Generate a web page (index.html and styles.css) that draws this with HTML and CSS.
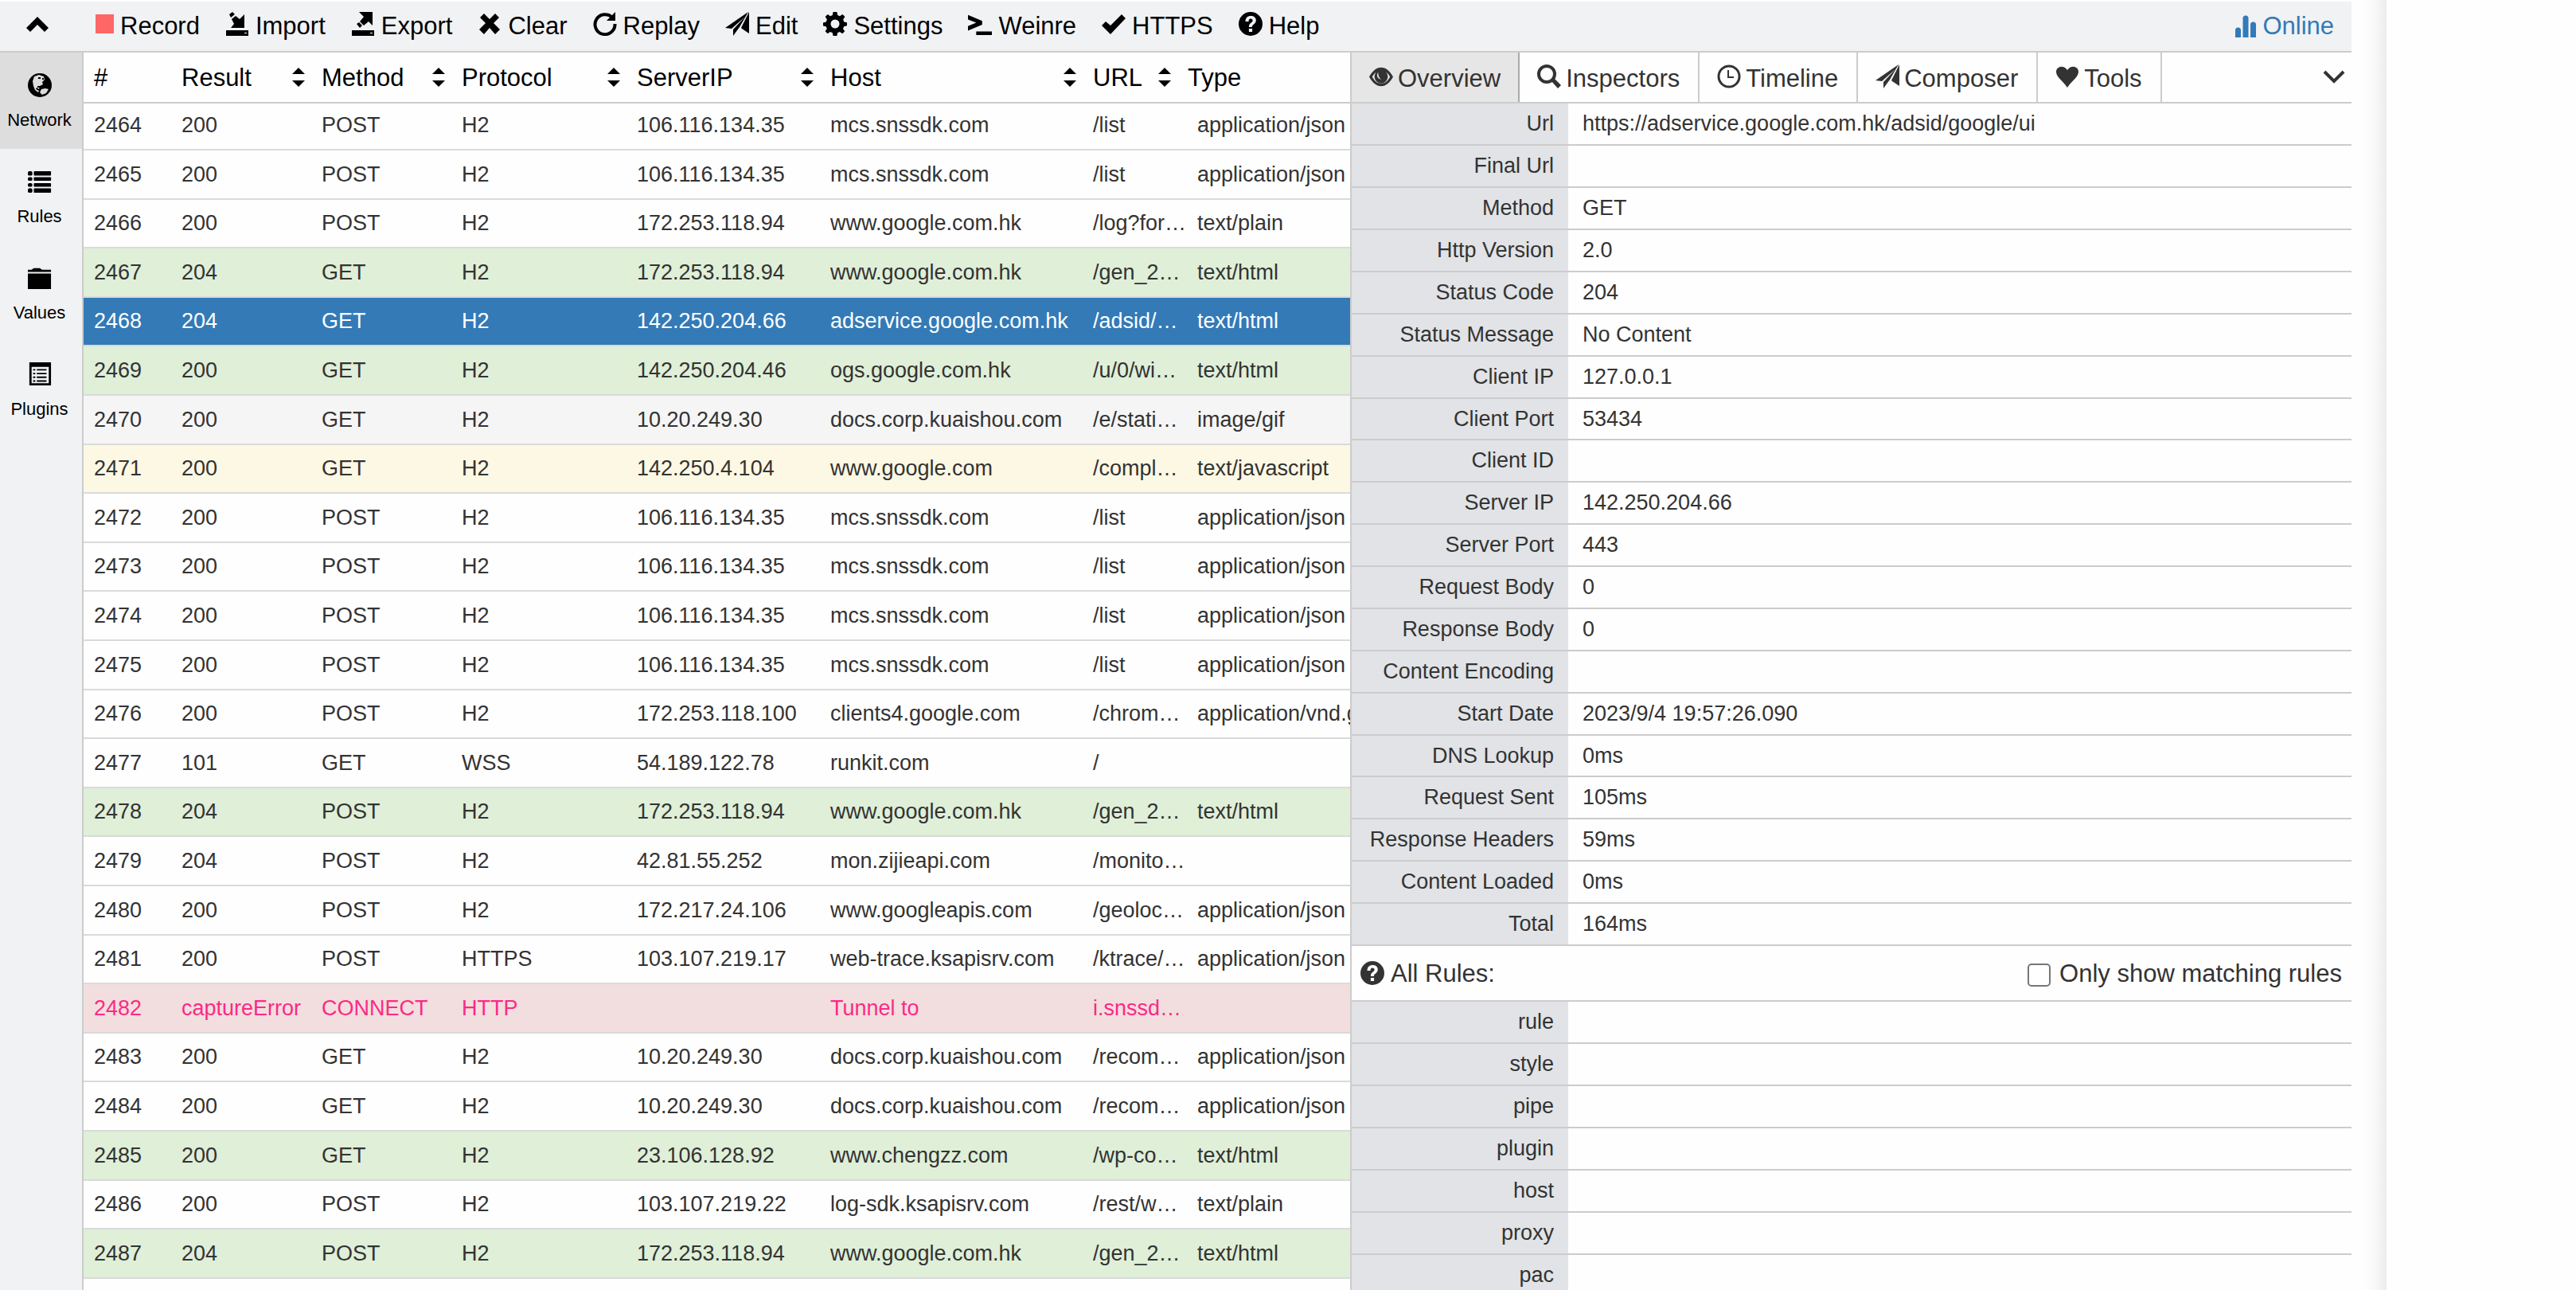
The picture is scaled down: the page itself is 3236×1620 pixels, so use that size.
FILE: index.html
```html
<!DOCTYPE html>
<html lang="en">
<head>
<meta charset="utf-8">
<title>Network</title>
<link rel="stylesheet" href="styles.css">
</head>
<body>
<svg class="sprite" aria-hidden="true">
  <symbol id="i-up" viewBox="0 0 30 30"><path d="M15 6l14 14-5 5-9-9-9 9-5-5z"/></symbol>
  <symbol id="i-down" viewBox="0 0 30 30"><path d="M3 8l12 12L27 8" fill="none" stroke="currentColor" stroke-width="4"/></symbol>
  <symbol id="i-import" viewBox="0 0 30 30"><path d="M5 3l4-3 3 3-5 4zM8 9l5-4 5 4 6-6v17H7l4-5zM1 23h28v7H1z"/><path class="led" d="M24 26h3v1h-3z"/></symbol>
  <symbol id="i-export" viewBox="0 0 30 30"><path d="M10 0h17v17l-5-5-6 5-5-5 5-6zM7 15l3-2 4 4-3 3zM1 23h28v7H1z"/><path class="led" d="M24 26h3v1h-3z"/></symbol>
  <symbol id="i-clear" viewBox="0 0 30 30"><path d="M8 2l7 7 7-7 5 5-7 7 8 8-6 6-7-8-7 8-6-6 8-8-7-7z"/></symbol>
  <symbol id="i-replay" viewBox="0 0 30 30"><path d="M24 7A12.500 12.500 0 1 0 27.500 15" fill="none" stroke="currentColor" stroke-width="4"/><path d="M28 0v11H17z"/></symbol>
  <symbol id="i-plane" viewBox="0 0 30 30"><path d="M29 0L0 20l8 1L25 6 10 22v8l8-11zM30 0v27l-9-6-1-1z"/></symbol>
  <symbol id="i-gear" viewBox="0 0 30 30"><path fill-rule="evenodd" d="M12.600 0h4.800l.8 4 2.800 1.200L24.400 3l3 3-2.200 3.400L26.300 12.500l3.700.8v4l-3.800.9-1.200 2.800 2.200 3.300-3 3-3.300-2.200-2.800 1.200-.7 3.700h-4.800l-.8-3.700L8.900 25.100 5.600 27.300l-3-3 2.200-3.300-1.200-2.800L0 17.400v-4l3.800-.9L4.900 9.400 2.700 6l3-3L9 5.200 11.800 4zM15 9.500a5.500 5.500 0 1 0 0 11 5.500 5.500 0 0 0 0-11z"/></symbol>
  <symbol id="i-terminal" viewBox="0 0 32 30"><path d="M0 3l19 8v5L0 24v-6l11-4.500L0 9zM11 25h21v5H11z"/></symbol>
  <symbol id="i-check" viewBox="0 0 30 30"><path d="M25 3l5 5-19 20L0 17l5-5 6 5z"/></symbol>
  <symbol id="i-help" viewBox="0 0 30 30"><path fill-rule="evenodd" d="M15 0a15 15 0 1 1 0 30 15 15 0 0 1 0-30zM8.500 12h4c0-2.500 1-3.500 2.500-3.500s2.600.8 2.600 2.200c0 1.200-.6 1.800-2 2.900-2 1.500-2.700 2.900-2.700 5.400h4c0-1.600.3-2.100 1.900-3.300 2-1.500 3-3 3-5.200 0-3.500-2.700-5.500-6.600-5.500-4 0-6.600 2.400-6.700 7zM12.900 21v4h4.200v-4z"/></symbol>
  <symbol id="i-bars" viewBox="0 0 30 30"><path d="M2 30V21a3 3 0 0 1 7 0v9zM11.500 30V6a3 3 0 0 1 7 0v24zM21 30V14a3 3 0 0 1 7 0v16z"/></symbol>
  <symbol id="i-globe" viewBox="0 0 30 30"><circle cx="15" cy="15" r="15"/><path class="land" d="M8 4l6-2 6 2 1 4-3 3 1 3-4 2-1 4-3-2-1 2 4 2-1 2-4-3-2-5-1-6zM17 20l5-1 4 1-3 5-5 2-3-3z"/><path d="M13 5h3v2h-3zM18 6h2v2h-2zM12 16h3v2h-3z"/></symbol>
  <symbol id="i-list" viewBox="0 0 32 30"><rect y="1" width="6" height="6" rx="2"/><rect y="9" width="6" height="5" rx="2"/><rect y="17" width="6" height="5" rx="2"/><rect y="24" width="6" height="6" rx="2"/><rect x="8" y="1" width="23" height="6" rx="1"/><rect x="8" y="9" width="23" height="5" rx="1"/><rect x="8" y="17" width="23" height="5" rx="1"/><rect x="8" y="24" width="23" height="6" rx="1"/></symbol>
  <symbol id="i-folder" viewBox="0 0 32 30"><path d="M0 4h5l3-2h8l3 2h12v3H0zM0 9h31v21H0z"/></symbol>
  <symbol id="i-listalt" viewBox="0 0 30 32"><path fill-rule="evenodd" d="M1 0h29v31H1zM4 6v22h23V6zM6 9h3v2H6zm5 0h13v2H11zM6 14h3v2H6zm5 0h13v2H11zM6 19h3v2H6zm5 0h13v2H11zM6 24h3v2H6zm5 0h13v2H11z"/></symbol>
  <symbol id="i-eye" viewBox="0 0 32 30"><path fill-rule="evenodd" d="M0 15.500C4 8 9.500 3 16 3s12 5 16 12.500C28 23 22.500 28 16 28S4 23 0 15.500zm4 0C7 21 11 24.500 16 24.500S25 21 28 15.500C26.500 12.700 24.700 10.500 22.500 9a9 9 0 1 1-13 0C7.300 10.500 5.500 12.700 4 15.500z"/><path class="glint" d="M12 9.500c-3 4-1 9 4 9.500-3-2-4-6-4-9.500z"/></symbol>
  <symbol id="i-search" viewBox="0 0 30 30"><circle cx="12" cy="12" r="10" fill="none" stroke="currentColor" stroke-width="4"/><path d="M17 20l4-3 9 9-4 4z"/></symbol>
  <symbol id="i-clock" viewBox="0 0 30 30"><circle cx="15" cy="15" r="13" fill="none" stroke="currentColor" stroke-width="3"/><path d="M13 7h2v8h6v2h-8z"/></symbol>
  <symbol id="i-heart" viewBox="0 0 30 30"><path d="M15 29C9 20 1 16 1 9c0-7 10-9 14-2 4-7 14-5 14 2 0 7-8 11-14 20z"/></symbol>
  <symbol id="i-sort" viewBox="0 0 16 24"><path d="M8 0l8 8H0zM0 16h16l-8 8z"/></symbol>
</svg>
<div class="app">
  <header class="topbar">
    <button class="fold" aria-label="Collapse"><svg class="icon"><use href="#i-up"/></svg></button>
    <nav class="actions">
      <a href="#"><span class="rec"></span>Record</a>
      <a href="#"><svg class="icon"><use href="#i-import"/></svg>Import</a>
      <a href="#"><svg class="icon"><use href="#i-export"/></svg>Export</a>
      <a href="#"><svg class="icon"><use href="#i-clear"/></svg>Clear</a>
      <a href="#"><svg class="icon"><use href="#i-replay"/></svg>Replay</a>
      <a href="#"><svg class="icon"><use href="#i-plane"/></svg>Edit</a>
      <a href="#"><svg class="icon"><use href="#i-gear"/></svg>Settings</a>
      <a href="#"><svg class="icon"><use href="#i-terminal"/></svg>Weinre</a>
      <a href="#"><svg class="icon"><use href="#i-check"/></svg>HTTPS</a>
      <a href="#"><svg class="icon"><use href="#i-help"/></svg>Help</a>
    </nav>
    <a class="online" href="#"><svg class="icon"><use href="#i-bars"/></svg>Online</a>
  </header>
  <div class="main">
    <nav class="side">
      <a class="active" href="#"><svg class="icon"><use href="#i-globe"/></svg>Network</a>
      <a href="#"><svg class="icon"><use href="#i-list"/></svg>Rules</a>
      <a href="#"><svg class="icon"><use href="#i-folder"/></svg>Values</a>
      <a href="#"><svg class="icon"><use href="#i-listalt"/></svg>Plugins</a>
    </nav>
    <section class="list">
      <table class="requests">
        <colgroup><col class="c-id"><col class="c-result"><col class="c-method"><col class="c-protocol"><col class="c-ip"><col class="c-host"><col class="c-url"><col></colgroup>
        <thead><tr>
          <th>#</th>
          <th><button>Result<svg class="sort"><use href="#i-sort"/></svg></button></th>
          <th><button>Method<svg class="sort"><use href="#i-sort"/></svg></button></th>
          <th><button>Protocol<svg class="sort"><use href="#i-sort"/></svg></button></th>
          <th><button>ServerIP<svg class="sort"><use href="#i-sort"/></svg></button></th>
          <th><button>Host<svg class="sort"><use href="#i-sort"/></svg></button></th>
          <th><button>URL<svg class="sort"><use href="#i-sort"/></svg></button></th>
          <th>Type</th>
        </tr></thead>
        <tbody>
          <tr><td>2464</td><td>200</td><td>POST</td><td>H2</td><td>106.116.134.35</td><td>mcs.snssdk.com</td><td>/list</td><td>application/json</td></tr>
          <tr><td>2465</td><td>200</td><td>POST</td><td>H2</td><td>106.116.134.35</td><td>mcs.snssdk.com</td><td>/list</td><td>application/json</td></tr>
          <tr><td>2466</td><td>200</td><td>POST</td><td>H2</td><td>172.253.118.94</td><td>www.google.com.hk</td><td>/log?for…</td><td>text/plain</td></tr>
          <tr class="html"><td>2467</td><td>204</td><td>GET</td><td>H2</td><td>172.253.118.94</td><td>www.google.com.hk</td><td>/gen_2…</td><td>text/html</td></tr>
          <tr class="selected"><td>2468</td><td>204</td><td>GET</td><td>H2</td><td>142.250.204.66</td><td>adservice.google.com.hk</td><td>/adsid/…</td><td>text/html</td></tr>
          <tr class="html"><td>2469</td><td>200</td><td>GET</td><td>H2</td><td>142.250.204.46</td><td>ogs.google.com.hk</td><td>/u/0/wi…</td><td>text/html</td></tr>
          <tr class="image"><td>2470</td><td>200</td><td>GET</td><td>H2</td><td>10.20.249.30</td><td>docs.corp.kuaishou.com</td><td>/e/stati…</td><td>image/gif</td></tr>
          <tr class="script"><td>2471</td><td>200</td><td>GET</td><td>H2</td><td>142.250.4.104</td><td>www.google.com</td><td>/compl…</td><td>text/javascript</td></tr>
          <tr><td>2472</td><td>200</td><td>POST</td><td>H2</td><td>106.116.134.35</td><td>mcs.snssdk.com</td><td>/list</td><td>application/json</td></tr>
          <tr><td>2473</td><td>200</td><td>POST</td><td>H2</td><td>106.116.134.35</td><td>mcs.snssdk.com</td><td>/list</td><td>application/json</td></tr>
          <tr><td>2474</td><td>200</td><td>POST</td><td>H2</td><td>106.116.134.35</td><td>mcs.snssdk.com</td><td>/list</td><td>application/json</td></tr>
          <tr><td>2475</td><td>200</td><td>POST</td><td>H2</td><td>106.116.134.35</td><td>mcs.snssdk.com</td><td>/list</td><td>application/json</td></tr>
          <tr><td>2476</td><td>200</td><td>POST</td><td>H2</td><td>172.253.118.100</td><td>clients4.google.com</td><td>/chrom…</td><td>application/vnd.google</td></tr>
          <tr><td>2477</td><td>101</td><td>GET</td><td>WSS</td><td>54.189.122.78</td><td>runkit.com</td><td>/</td><td></td></tr>
          <tr class="html"><td>2478</td><td>204</td><td>POST</td><td>H2</td><td>172.253.118.94</td><td>www.google.com.hk</td><td>/gen_2…</td><td>text/html</td></tr>
          <tr><td>2479</td><td>204</td><td>POST</td><td>H2</td><td>42.81.55.252</td><td>mon.zijieapi.com</td><td>/monito…</td><td></td></tr>
          <tr><td>2480</td><td>200</td><td>POST</td><td>H2</td><td>172.217.24.106</td><td>www.googleapis.com</td><td>/geoloc…</td><td>application/json</td></tr>
          <tr><td>2481</td><td>200</td><td>POST</td><td>HTTPS</td><td>103.107.219.17</td><td>web-trace.ksapisrv.com</td><td>/ktrace/…</td><td>application/json</td></tr>
          <tr class="error"><td>2482</td><td>captureError</td><td>CONNECT</td><td>HTTP</td><td></td><td>Tunnel to</td><td>i.snssd…</td><td></td></tr>
          <tr><td>2483</td><td>200</td><td>GET</td><td>H2</td><td>10.20.249.30</td><td>docs.corp.kuaishou.com</td><td>/recom…</td><td>application/json</td></tr>
          <tr><td>2484</td><td>200</td><td>GET</td><td>H2</td><td>10.20.249.30</td><td>docs.corp.kuaishou.com</td><td>/recom…</td><td>application/json</td></tr>
          <tr class="html"><td>2485</td><td>200</td><td>GET</td><td>H2</td><td>23.106.128.92</td><td>www.chengzz.com</td><td>/wp-co…</td><td>text/html</td></tr>
          <tr><td>2486</td><td>200</td><td>POST</td><td>H2</td><td>103.107.219.22</td><td>log-sdk.ksapisrv.com</td><td>/rest/w…</td><td>text/plain</td></tr>
          <tr class="html"><td>2487</td><td>204</td><td>POST</td><td>H2</td><td>172.253.118.94</td><td>www.google.com.hk</td><td>/gen_2…</td><td>text/html</td></tr>
        </tbody>
      </table>
    </section>
    <section class="detail">
      <div class="tabs">
        <button class="tab active"><svg class="icon"><use href="#i-eye"/></svg>Overview</button>
        <button class="tab"><svg class="icon"><use href="#i-search"/></svg>Inspectors</button>
        <button class="tab"><svg class="icon"><use href="#i-clock"/></svg>Timeline</button>
        <button class="tab"><svg class="icon"><use href="#i-plane"/></svg>Composer</button>
        <button class="tab"><svg class="icon"><use href="#i-heart"/></svg>Tools</button>
        <button class="more" aria-label="More"><svg class="icon"><use href="#i-down"/></svg></button>
      </div>
      <table class="props">
        <tr><th>Url</th><td>https://adservice.google.com.hk/adsid/google/ui</td></tr>
        <tr><th>Final Url</th><td></td></tr>
        <tr><th>Method</th><td>GET</td></tr>
        <tr><th>Http Version</th><td>2.0</td></tr>
        <tr><th>Status Code</th><td>204</td></tr>
        <tr><th>Status Message</th><td>No Content</td></tr>
        <tr><th>Client IP</th><td>127.0.0.1</td></tr>
        <tr><th>Client Port</th><td>53434</td></tr>
        <tr><th>Client ID</th><td></td></tr>
        <tr><th>Server IP</th><td>142.250.204.66</td></tr>
        <tr><th>Server Port</th><td>443</td></tr>
        <tr><th>Request Body</th><td>0</td></tr>
        <tr><th>Response Body</th><td>0</td></tr>
        <tr><th>Content Encoding</th><td></td></tr>
        <tr><th>Start Date</th><td>2023/9/4 19:57:26.090</td></tr>
        <tr><th>DNS Lookup</th><td>0ms</td></tr>
        <tr><th>Request Sent</th><td>105ms</td></tr>
        <tr><th>Response Headers</th><td>59ms</td></tr>
        <tr><th>Content Loaded</th><td>0ms</td></tr>
        <tr><th>Total</th><td>164ms</td></tr>
      </table>
      <div class="rules-head">
        <a href="#"><svg class="icon"><use href="#i-help"/></svg>All Rules:</a>
        <label><input type="checkbox">Only show matching rules</label>
      </div>
      <table class="props">
        <tr><th>rule</th><td></td></tr>
        <tr><th>style</th><td></td></tr>
        <tr><th>pipe</th><td></td></tr>
        <tr><th>plugin</th><td></td></tr>
        <tr><th>host</th><td></td></tr>
        <tr><th>proxy</th><td></td></tr>
        <tr><th>pac</th><td></td></tr>
      </table>
    </section>
  </div>
</div>
</body>
</html>
```
FILE: styles.css
```css
* { box-sizing: border-box; }
body {
  margin: 0;
  display: grid;
  grid-template-columns: minmax(0, 1fr) 238px;
  height: 100vh;
  overflow: hidden;
  background: #fefefe;
  color: #333;
  font: 27px/1 "Liberation Sans", Arial, sans-serif;
}
a { color: inherit; text-decoration: none; }
button { font: inherit; color: inherit; background: none; border: 0; padding: 0; }
.sprite { position: absolute; width: 0; height: 0; }
.icon { width: 30px; height: 30px; fill: currentColor; flex: none; }
.led { fill: #fff; }
.land { fill: #ddd; }
.glint { fill: #e6e6e6; }

.app {
  display: flex;
  flex-direction: column;
  min-width: 0;
  height: 100vh;
  padding: 2px 44px 0 0;
  background: linear-gradient(to left, #ececec, #f8f8f8 14px, #fefefe 30px, #fefefe 44px);
}

/* top toolbar */
.topbar {
  display: flex;
  align-items: center;
  flex: none;
  height: 64px;
  padding: 0 22px 2px 32px;
  border-bottom: 2px solid #ccc;
  background: #f0f2f4;
  color: #000;
  font-size: 31px;
}
.topbar .icon, .rec, .tab .icon { margin-bottom: 4px; }
.fold { display: flex; }
.actions { display: flex; gap: 32px; margin-left: 58px; }
.actions a, .online { display: flex; align-items: center; gap: 8px; }
.rec { width: 23px; height: 24px; background: #f66; }
.online { gap: 6px; margin-left: auto; color: #337ab7; }
.online .icon { margin-bottom: 0; }

.main {
  display: grid;
  grid-template-columns: 105px minmax(0, 1591fr) minmax(0, 1258fr);
  flex: 1;
  min-height: 0;
  overflow: hidden;
}

/* side menu */
.side { border-right: 2px solid #ccc; background: #f0f2f4; color: #000; font-size: 22px; }
.side a {
  display: flex;
  flex-direction: column;
  align-items: center;
  gap: 18px;
  height: 121px;
  padding: 26px 6px 0 2px;
}
.side .active { background: #ddd; }

/* request list */
.list { overflow: hidden; background: #fefefe; }
.requests, .props { width: 100%; table-layout: fixed; border-collapse: separate; border-spacing: 0; }
.c-id { width: 110px; }
.c-result, .c-method { width: 176px; }
.c-protocol { width: 220px; }
.c-ip { width: 243px; }
.c-host { width: 330px; }
.c-url { width: 119px; }
.requests th {
  height: 64px;
  padding: 0 8px 0 13px;
  border-bottom: 2px solid #ccc;
  color: #000;
  font-size: 31px;
  font-weight: 400;
  text-align: left;
}
.requests th button { display: flex; align-items: center; justify-content: space-between; width: 100%; }
.sort { width: 16px; height: 24px; flex: none; }
.requests td {
  height: 62px;
  padding: 0 0 0 13px;
  border-bottom: 2px solid #dadada;
  white-space: nowrap;
}
.requests td:last-child { padding-left: 25px; }
.requests tr:nth-child(5n) td, .requests tr:nth-child(5n + 3) td { height: 61px; }
.requests tbody tr:first-child td { height: 59px; padding-bottom: 2px; }
.html { background: #dfefd8; }
.selected { background: #337ab7; color: #fff; }
.image { background: #f5f5f5; }
.script { background: #fcf8e3; }
.error { background: #f2dede; color: #fb2a86; }

/* detail panel */
.detail { overflow: hidden; border-left: 2px solid #ccc; background: #fefefe; }
.tabs { display: flex; height: 64px; border-bottom: 2px solid #ccc; font-size: 31px; }
.tab {
  display: flex;
  align-items: center;
  gap: 6px;
  padding: 2px 23px 0 22px;
  border-right: 2px solid #ccc;
}
.tab.active { padding-right: 22px; border-color: #aaa; background: #e6e6e6; }
.more { display: flex; align-items: center; margin-left: auto; padding-right: 7px; }
.props th, .props td { height: 53px; padding: 0 18px; border-bottom: 2px solid #ccc; }
.props tr:nth-child(8n) > * { height: 52px; }
.props th { width: 272px; background: #e1e3e6; font-weight: 400; text-align: right; white-space: nowrap; }
.rules-head {
  display: flex;
  align-items: center;
  justify-content: space-between;
  height: 70px;
  padding: 0 12px 0 11px;
  border-bottom: 2px solid #ccc;
  font-size: 31px;
}
.rules-head a, .rules-head label { display: flex; align-items: center; gap: 8px; }
.rules-head input {
  appearance: none;
  width: 29px;
  height: 29px;
  margin: 4px 3px 0 0;
  border: 2px solid #777;
  border-radius: 5px;
  background: #fff;
}
```
